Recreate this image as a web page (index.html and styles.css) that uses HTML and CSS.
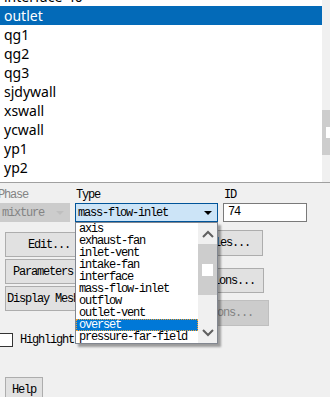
FILE: index.html
```html
<!DOCTYPE html>
<html lang="en">
<head>
  <meta charset="UTF-8" />
  <title>Boundary Conditions</title>
  <link rel="stylesheet" href="styles.css">
</head>
<body>
  <!-- Zone list -->
  <div class="zones">
    <div class="zone-list">
      <div class="zone-rows">
        <div class="zone">interface-40</div>
        <div class="zone selected">outlet</div>
        <div class="zone">qg1</div>
        <div class="zone">qg2</div>
        <div class="zone">qg3</div>
        <div class="zone">sjdywall</div>
        <div class="zone">xswall</div>
        <div class="zone">ycwall</div>
        <div class="zone">yp1</div>
        <div class="zone">yp2</div>
      </div>
    </div>
    <div class="vscroll">
      <div class="vthumb"><span></span></div>
    </div>
  </div>

  <div class="panel">
    <div class="fields">
      <div class="field phase">
        <label class="disabled-text">Phase</label>
        <div class="combo disabled">mixture<span class="arrow"></span></div>
      </div>
      <div class="field type">
        <label>Type</label>
        <div class="combo focused">mass-flow-inlet<span class="arrow"></span></div>

        <!-- open dropdown -->
        <div class="dropdown">
          <ul class="options">
            <li>axis</li>
            <li>exhaust-fan</li>
            <li>inlet-vent</li>
            <li>intake-fan</li>
            <li>interface</li>
            <li>mass-flow-inlet</li>
            <li>outflow</li>
            <li>outlet-vent</li>
            <li class="current">overset</li>
            <li>pressure-far-field</li>
          </ul>
          <div class="dscroll">
            <svg class="chev" width="12" height="8" viewBox="0 0 12 8"><path d="M1 7 L6 2 L11 7" fill="none" stroke="#606060" stroke-width="2"/></svg>
            <div class="dthumb"><span></span></div>
            <div class="dtrack"></div>
            <svg class="chev" width="12" height="8" viewBox="0 0 12 8"><path d="M1 1 L6 6 L11 1" fill="none" stroke="#606060" stroke-width="2"/></svg>
          </div>
        </div>
      </div>
      <div class="field id">
        <label>ID</label>
        <div class="textbox">74</div>
      </div>
    </div>

    <div class="actions">
      <div class="col col-left">
        <button class="btn btn-edit">Edit...</button>
        <button class="btn">Parameters...</button>
        <button class="btn">Display Mesh...</button>
      </div>
      <div class="col col-right">
        <button class="btn btn-r1">Profiles...</button>
        <button class="btn btn-r2">Operating Conditions...</button>
        <button class="btn btn-r3" disabled>Periodic Conditions...</button>
      </div>
    </div>

    <div class="highlight">
      <span class="check"></span>
      <span>Highlight Zone</span>
    </div>

    <button class="btn help">Help</button>
  </div>
</body>
</html>
```

FILE: styles.css
```css
body {
  margin: 0;
  width: 330px;
  height: 397px;
  overflow: hidden;
  background-color: #f0f0f0;
  font-family: "Liberation Mono", monospace;
  font-size: 12px;
  letter-spacing: -1.2px;
  color: #000;
}

/* Zone list */
.zones {
  display: flex;
  height: 183px;
  border-bottom: 1px solid #a0a0a0;
  box-sizing: border-box;
}

.zone-list {
  width: 324px;
  background-color: #fff;
  overflow: hidden;
}

.zone-rows {
  margin-top: -13px;
}

.zone {
  height: 19px;
  line-height: 19px;
  padding-left: 4px;
  font-family: "Noto Sans", sans-serif;
  font-size: 14px;
  letter-spacing: 0;
  color: #000;
}

.zone.selected {
  background-color: #036ab8;
  color: #fff;
}

.vscroll {
  flex: 1;
  background-color: #f0f0f0;
  padding-top: 110px;
}

.vthumb {
  height: 45px;
  background-color: #cdcdcd;
  padding-top: 17px;
  box-sizing: border-box;
}

.vthumb span {
  display: block;
  margin-left: 4px;
  width: 4px;
  height: 11px;
  background-color: #fff;
}

/* Lower panel */
.panel {
  padding-top: 5px;
}

.fields {
  display: grid;
  grid-template-columns: 73px 143px 84px;
  column-gap: 5px;
  margin-left: -3px;
}

.field {
  position: relative;
}

.field label {
  display: block;
  height: 14px;
  line-height: 14px;
  margin-bottom: 1px;
  padding-left: 1px;
}

.disabled-text {
  color: #838383;
}

.combo {
  display: flex;
  align-items: center;
  justify-content: space-between;
  height: 19px;
  box-sizing: border-box;
  padding: 0 5px 0 2px;
  border: 1px solid #7a7a7a;
}

.combo.disabled {
  background-color: #cccccc;
  border-color: #cccccc;
  color: #838383;
  padding-left: 4px;
}

.combo.focused {
  background-color: #cce4f7;
  border-color: #005499;
}

.arrow {
  width: 0;
  height: 0;
  border-left: 4px solid transparent;
  border-right: 4px solid transparent;
  border-top: 4px solid #000;
}

.combo.disabled .arrow {
  border-top-color: #bfbfbf;
}

.textbox {
  height: 19px;
  box-sizing: border-box;
  border: 1px solid #7a7a7a;
  background-color: #fff;
  padding-left: 4px;
  line-height: 17px;
}

/* Dropdown overlay */
.dropdown {
  position: absolute;
  top: 34px;
  left: 0;
  z-index: 5;
  width: 143px;
  height: 122px;
  box-sizing: border-box;
  display: flex;
  background-color: #fff;
  border: 1px solid #828790;
  box-shadow: 3px 3px 2px rgba(0, 0, 0, 0.35);
}

.options {
  list-style: none;
  margin: 0;
  padding: 0;
  flex: 1;
}

.options li {
  height: 12px;
  line-height: 12px;
  padding-left: 3px;
  white-space: nowrap;
  overflow: hidden;
}

.options li.current {
  background-color: #0078d7;
  color: #fff;
  outline: 1px dotted #f0a030;
  outline-offset: -1px;
}

.dscroll {
  width: 19px;
  background-color: #f0f0f0;
  display: flex;
  flex-direction: column;
  align-items: center;
}

.chev {
  display: block;
  margin: 7px 0 6px;
}

.dthumb {
  align-self: stretch;
  height: 51px;
  background-color: #cdcdcd;
  padding-top: 20px;
  box-sizing: border-box;
}

.dthumb span {
  display: block;
  margin: 0 auto;
  width: 11px;
  height: 12px;
  background-color: #fff;
}

.dtrack {
  flex: 1;
}

/* Buttons */
.actions {
  display: flex;
  align-items: flex-start;
  margin-top: 8px;
}

.col {
  display: flex;
  flex-direction: column;
}

.col-left {
  margin-left: 5px;
  width: 94px;
  padding-top: 2px;
  gap: 2px;
}

.col-right {
  margin-left: 51px;
  align-items: flex-start;
}

.btn {
  font-family: "Liberation Mono", monospace;
  font-size: 12px;
  letter-spacing: -1.2px;
  color: #000;
  background-color: #e1e1e1;
  border: 1px solid #adadad;
  height: 25px;
  padding: 0;
  white-space: nowrap;
  overflow: hidden;
}

.btn-edit {
  padding-right: 6px;
}

.col-left .btn {
  width: 94px;
}

.col-right .btn {
  display: flex;
  align-items: center;
  justify-content: flex-end;
}

.btn-r1 {
  width: 113px;
  height: 26px;
  padding-right: 12px;
}

.btn-r2 {
  width: 114px;
  margin-top: 12px;
  padding-right: 8px;
}

.btn-r3 {
  width: 119px;
  height: 26px;
  margin-top: 7px;
  padding-right: 15px;
}

.btn-r3:disabled {
  background-color: #cccccc;
  border-color: #bfbfbf;
  color: #838383;
}

.highlight {
  display: flex;
  align-items: center;
  gap: 7px;
  margin-top: 7px;
  margin-left: -1px;
  height: 14px;
}

.check {
  width: 14px;
  height: 14px;
  box-sizing: border-box;
  border: 1px solid #333;
  background-color: #fff;
}

.help {
  display: block;
  margin: 30px 0 0 5px;
  width: 38px;
}
```
